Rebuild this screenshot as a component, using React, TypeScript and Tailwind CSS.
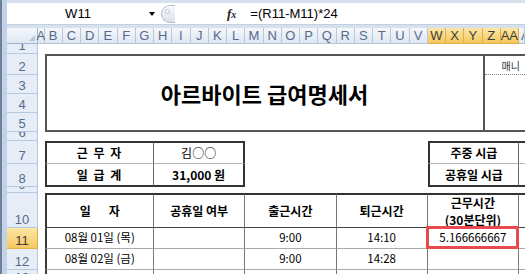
import clsx from "clsx"

const colLetters = [
  "A", "B", "C", "D", "E", "F", "G", "H", "I", "J", "K", "L", "M", "N",
  "O", "P", "Q", "R", "S", "T", "U", "V", "W", "X", "Y", "Z", "AA", "A",
]

const rowHeaders = [
  { label: "1", place: "row-start-2" },
  { label: "2", place: "row-start-3" },
  { label: "3", place: "row-start-4" },
  { label: "4", place: "row-start-5" },
  { label: "5", place: "row-start-6" },
  { label: "6", place: "row-start-7" },
  { label: "7", place: "row-start-8" },
  { label: "8", place: "row-start-9" },
  { label: "9", place: "row-start-10" },
  { label: "10", place: "row-start-11" },
  { label: "11", place: "row-start-12", selected: true },
  { label: "12", place: "row-start-13" },
  { label: "13", place: "row-start-14" },
]

const dailyCols = [
  "col-start-3 col-end-9 border-l-2 border-l-[#3a3a3a]",
  "col-start-9 col-end-14",
  "col-start-14 col-end-19",
  "col-start-19 col-end-24",
  "col-start-24 col-end-29",
  "col-start-29 col-end-30 border-r-0",
]

const dailyRows = [
  { place: "row-start-12 row-end-13", cells: ["08월 01일 (목)", "", "9:00", "14:10", "5.166666667", ""] },
  { place: "row-start-13 row-end-14", cells: ["08월 02일 (금)", "", "9:00", "14:28", "", ""] },
  { place: "row-start-14 row-end-15 border-b-0", cells: ["", "", "", "", "", ""] },
]

function FormulaBar() {
  return (
    <div className="flex h-[28px] shrink-0 flex-col bg-[#d7e1ed] pt-[3px]">
      <div className="flex h-[22px] items-center border-b border-[#c3d0e0] bg-white">
        <div className="flex h-full w-[151px] items-center">
          <span className="flex-1 text-center text-[13px] text-black">W11</span>
          <span className="mr-[3px] h-0 w-0 border-x-[3px] border-t-[4px] border-x-transparent border-t-black" />
        </div>
        <div className="ml-[3px] flex h-[18px] w-[14px] items-start rounded-l-full border border-r-0 border-[#aebcd0] bg-linear-to-b from-[#f8f9fb] to-[#dce3eb] pl-[3px] pt-[3px]">
          <span className="h-[5px] w-[5px] rounded-full border border-[#b4c0cf] bg-white" />
        </div>
        <span className="ml-[52px] font-['Liberation_Serif',serif] text-[13px] font-bold italic text-[#222]">
          f<span className="text-[10px]">x</span>
        </span>
        <span className="ml-[14px] text-[13px] text-black">=(R11-M11)*24</span>
      </div>
    </div>
  )
}

function Sheet() {
  return (
    <div className="grid flex-1 grid-cols-[31px_6.5px_repeat(26,18.25px)_1fr] grid-rows-[16px_10px_21px_19px_19px_19px_9px_23px_23px_6px_35px_21px_21px_1fr] font-['Noto_Sans_CJK_KR','Noto_Sans',sans-serif] text-[12px] text-black">
      {/* select-all corner */}
      <div className="col-start-1 row-start-1 flex items-end justify-end border-r border-b border-[#9fb5cf] bg-linear-to-b from-[#f4f7fb] to-[#e0e8f3] p-[2px]">
        <svg width="6" height="6" viewBox="0 0 6 6">
          <path d="M6 0 L6 6 L0 6 Z" fill="#b7c4d4" />
        </svg>
      </div>

      {colLetters.map((letter, i) => {
        const selected = i >= 22 && i <= 26
        return (
          <div
            key={i}
            className={clsx(
              "row-start-1 flex items-center font-['Liberation_Sans',sans-serif] text-[13px] leading-none border-r border-b",
              i === 27 ? "justify-start overflow-hidden pl-[2px]" : "justify-center",
              selected
                ? "border-[#e1ad4d] bg-linear-to-b from-[#fbe7a6] to-[#f4c75a] text-[#3c3c3c]"
                : "border-[#b6c8dd] bg-linear-to-b from-[#f4f7fb] to-[#dfe7f2] text-[#57698a]"
            )}
          >
            {letter}
          </div>
        )
      })}

      {rowHeaders.map((row) => (
        <div
          key={row.label}
          className={clsx(
            "col-start-1 flex items-end justify-center overflow-hidden border-r border-b font-['Liberation_Sans',sans-serif] text-[13px] leading-[15px]",
            row.place,
            row.selected
              ? "border-[#e1ad4d] bg-linear-to-b from-[#fbe6a3] to-[#f5c85e] text-[#3c3c3c]"
              : "border-[#b6c8dd] bg-[#e6edf7] text-[#57698a]"
          )}
        >
          {row.label}
        </div>
      ))}

      {/* title block */}
      <div className="col-start-3 col-end-27 row-start-3 row-end-7 flex items-center justify-center border-y-2 border-l-2 border-[#555] text-[22px] font-bold">
        아르바이트 급여명세서
      </div>
      <div className="col-start-27 col-end-30 row-start-3 row-end-7 flex flex-col border-y-2 border-l-2 border-[#555]">
        <div className="flex h-[19px] items-center overflow-hidden whitespace-nowrap border-b border-dotted border-[#888] pl-[17px] text-[10px] text-[#333]">
          매니
        </div>
      </div>

      {/* worker block */}
      <div className="col-start-3 col-end-9 row-start-8 row-end-9 flex items-center justify-center border-t-2 border-l-2 border-r border-b border-t-[#333] border-l-[#333] border-r-[#666] border-b-[#b5b5b5] font-bold tracking-[1.5px]">
        근 무 자
      </div>
      <div className="col-start-9 col-end-14 row-start-8 row-end-9 flex items-center justify-center border-t-2 border-r-2 border-b border-t-[#333] border-r-[#333] border-b-[#b5b5b5]">
        김○○
      </div>
      <div className="col-start-3 col-end-9 row-start-9 row-end-10 flex items-center justify-center border-l-2 border-b-2 border-r border-l-[#333] border-b-[#333] border-r-[#666] font-bold tracking-[1.5px]">
        일 급 계
      </div>
      <div className="col-start-9 col-end-14 row-start-9 row-end-10 flex items-center justify-center border-r-2 border-b-2 border-[#333] font-bold">
        31,000 원
      </div>

      {/* hourly rate block */}
      <div className="col-start-24 col-end-29 row-start-8 row-end-9 flex items-center justify-center border-t-2 border-l-2 border-r border-b border-t-[#333] border-l-[#333] border-r-[#666] border-b-[#b5b5b5] font-bold">
        주중 시급
      </div>
      <div className="col-start-29 col-end-30 row-start-8 row-end-9 border-t-2 border-b border-t-[#333] border-b-[#b5b5b5]" />
      <div className="col-start-24 col-end-29 row-start-9 row-end-10 flex items-center justify-center border-l-2 border-b-2 border-r border-l-[#333] border-b-[#333] border-r-[#666] font-bold">
        공휴일 시급
      </div>
      <div className="col-start-29 col-end-30 row-start-9 row-end-10 border-b-2 border-[#333]" />

      {/* daily table header */}
      <div className={clsx("row-start-11 row-end-12 flex items-center justify-center gap-[18px] border-t-2 border-b border-r border-t-[#333] border-b-[#444] border-r-[#777] font-bold", dailyCols[0])}>
        <span>일</span>
        <span>자</span>
      </div>
      <div className={clsx("row-start-11 row-end-12 flex items-center justify-center border-t-2 border-b border-r border-t-[#333] border-b-[#444] border-r-[#777] font-bold", dailyCols[1])}>
        공휴일 여부
      </div>
      <div className={clsx("row-start-11 row-end-12 flex items-center justify-center border-t-2 border-b border-r border-t-[#333] border-b-[#444] border-r-[#777] font-bold", dailyCols[2])}>
        출근시간
      </div>
      <div className={clsx("row-start-11 row-end-12 flex items-center justify-center border-t-2 border-b border-r border-t-[#333] border-b-[#444] border-r-[#777] font-bold", dailyCols[3])}>
        퇴근시간
      </div>
      <div className={clsx("row-start-11 row-end-12 flex flex-col items-center justify-center border-t-2 border-b border-r border-t-[#333] border-b-[#444] border-r-[#777] font-bold leading-[17px]", dailyCols[4])}>
        <span>근무시간</span>
        <span>(30분단위)</span>
      </div>
      <div className={clsx("row-start-11 row-end-12 border-t-2 border-b border-t-[#333] border-b-[#444]", dailyCols[5])} />

      {dailyRows.map((row, r) =>
        row.cells.map((text, c) => (
          <div
            key={`${r}-${c}`}
            className={clsx(
              "relative flex items-center justify-center whitespace-nowrap border-b border-r border-b-[#aaa] border-r-[#777] text-[11.5px]",
              dailyCols[c],
              row.place
            )}
          >
            {text}
            {r === 0 && c === 4 ? (
              <span className="absolute -top-[2px] -bottom-[1px] -left-[2px] -right-[1px] border-[3px] border-[#e84a4f]" />
            ) : null}
          </div>
        ))
      )}
    </div>
  )
}

export default function App() {
  return (
    <div className="flex h-[274px] w-[525px] overflow-hidden bg-white font-['Liberation_Sans',sans-serif]">
      <div className="w-[7px] shrink-0 border-l-2 border-[#6f8199] bg-[#c3d3e7]" />
      <div className="flex min-w-0 flex-1 flex-col">
        <FormulaBar />
        <Sheet />
      </div>
    </div>
  )
}
